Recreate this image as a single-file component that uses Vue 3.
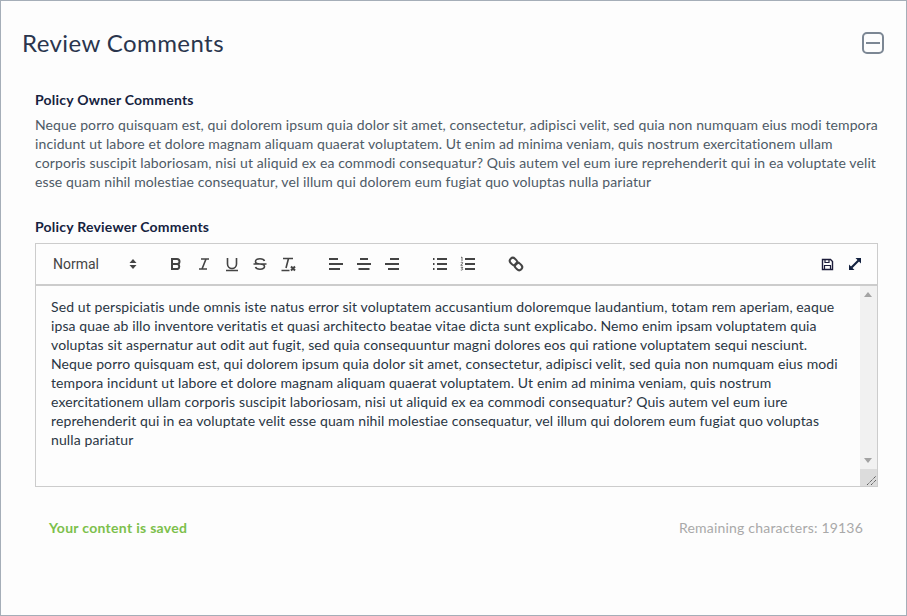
<template>
  <div class="panel">
    <header class="panel-head">
      <h2 class="panel-title">Review Comments</h2>
      <button class="collapse-btn" aria-label="Collapse"><span class="collapse-bar"></span></button>
    </header>

    <section class="owner">
      <h3 class="label">Policy Owner Comments</h3>
      <p class="owner-text">
        <span v-for="line in ownerLines" :key="line" class="line">{{ line }}</span>
      </p>
    </section>

    <section class="reviewer">
      <h3 class="label label-reviewer">Policy Reviewer Comments</h3>
      <div class="editor">
        <div class="toolbar">
          <div class="format-select">
            <span>Normal</span>
            <svg class="select-arrows" width="8" height="12" viewBox="0 0 8 12">
              <path d="M4 1 7.5 5H.5zM4 11 .5 7h7z" fill="#444" />
            </svg>
          </div>

          <div class="tool-group inline-tools">
            <svg class="tool" width="18" height="18" viewBox="0 0 18 18">
              <path class="st" d="M5 4h5a2.5 2.5 0 0 1 0 5H5zM5 9h5.6a2.7 2.7 0 0 1 0 5H5zM5 4v10" />
            </svg>
            <svg class="tool" width="18" height="18" viewBox="0 0 18 18">
              <path class="st thin" d="M6 4h8M4 14h8M11 4 7 14" />
            </svg>
            <svg class="tool" width="18" height="18" viewBox="0 0 18 18">
              <path class="st thin" d="M4.500 3v6a4.500 4.500 0 0 0 9 0V3M3 15.500h12" />
            </svg>
            <svg class="tool" width="18" height="18" viewBox="0 0 18 18">
              <path class="st thin" d="M13.500 6c-.5-1.500-2-2.200-4.500-2.200-2.700 0-4.500 1-4.500 2.700S7 9 9 9s4.500.8 4.500 2.600S11.700 14.200 9 14.200c-2.500 0-4-.7-4.500-2.200M2.500 9h13" />
            </svg>
            <svg class="tool" width="18" height="18" viewBox="0 0 18 18">
              <path class="st thin" d="M4 3.500h10M9.500 3.500 7 13M2.500 15.500h8" />
              <path class="st" d="M12 11.500 16 15.500M16 11.500 12 15.500" />
            </svg>
          </div>

          <div class="tool-group align-tools">
            <svg class="tool" width="18" height="18" viewBox="0 0 18 18">
              <path class="st" d="M2 4h9M2 9h14M2 14h11" />
            </svg>
            <svg class="tool" width="18" height="18" viewBox="0 0 18 18">
              <path class="st" d="M5 4h8M2 9h14M3.500 14h11" />
            </svg>
            <svg class="tool" width="18" height="18" viewBox="0 0 18 18">
              <path class="st" d="M7 4h9M2 9h14M5 14h11" />
            </svg>
          </div>

          <div class="tool-group list-tools">
            <svg class="tool" width="18" height="18" viewBox="0 0 18 18">
              <path class="st" d="M6 4h10M6 9h10M6 14h10" />
              <path class="st" d="M2 4h1.500M2 9h1.500M2 14h1.500" />
            </svg>
            <svg class="tool" width="18" height="18" viewBox="0 0 18 18">
              <path class="st" d="M6 4h10M6 9h10M6 14h10" />
              <path class="st hair" d="M2 2.500 3 2v4M1.800 7.700c.3-.8 2-.8 2 .2 0 .8-2 1.400-2 2.400h2M1.800 12.300h2l-1 1.200c1.300 0 1.300 2-1 1.500" />
            </svg>
          </div>

          <svg class="tool link-tool" width="18" height="18" viewBox="0 0 18 18">
            <g class="st" transform="rotate(45 9 9)">
              <rect x="1.500" y="6" width="8" height="6" rx="3" />
              <rect x="8.500" y="6" width="8" height="6" rx="3" />
            </g>
          </svg>

          <div class="tool-right">
            <svg width="13" height="13" viewBox="0 0 13 13">
              <path d="M1.500 1.500h8l2 2v8h-10z" fill="none" stroke="#1c1c3a" stroke-width="1.400" />
              <path d="M4 1.500h4v3H4zM3.500 7.500h6v4h-6z" fill="none" stroke="#1c1c3a" stroke-width="1.200" />
            </svg>
            <svg width="14" height="14" viewBox="0 0 14 14">
              <path d="M3.500 10.500 10.500 3.500" stroke="#13213f" stroke-width="2.200" />
              <path d="M7.500 1h5.500v5.500zM1 7.500V13h5.500z" fill="#13213f" />
            </svg>
          </div>
        </div>

        <div class="editor-body">
          <div class="editor-text">
            <span v-for="line in reviewerLines" :key="line" class="line">{{ line }}</span>
          </div>
          <div class="scrollbar">
            <span class="arrow up"></span>
            <span class="arrow down"></span>
            <div class="resize-corner">
              <svg width="18" height="18" viewBox="0 0 18 18">
                <path d="M7 16 16 7M11 16 16 11" stroke="#444" stroke-dasharray="1.200 .8" fill="none" />
              </svg>
            </div>
          </div>
        </div>
      </div>

      <div class="status">
        <span class="saved">Your content is saved</span>
        <span class="remaining">Remaining characters: 19136</span>
      </div>
    </section>
  </div>
</template>

<script setup>
const ownerLines = [
  'Neque porro quisquam est, qui dolorem ipsum quia dolor sit amet, consectetur, adipisci velit, sed quia non numquam eius modi tempora',
  'incidunt ut labore et dolore magnam aliquam quaerat voluptatem. Ut enim ad minima veniam, quis nostrum exercitationem ullam',
  'corporis suscipit laboriosam, nisi ut aliquid ex ea commodi consequatur? Quis autem vel eum iure reprehenderit qui in ea voluptate velit',
  'esse quam nihil molestiae consequatur, vel illum qui dolorem eum fugiat quo voluptas nulla pariatur',
];

const reviewerLines = [
  'Sed ut perspiciatis unde omnis iste natus error sit voluptatem accusantium doloremque laudantium, totam rem aperiam, eaque',
  'ipsa quae ab illo inventore veritatis et quasi architecto beatae vitae dicta sunt explicabo. Nemo enim ipsam voluptatem quia',
  'voluptas sit aspernatur aut odit aut fugit, sed quia consequuntur magni dolores eos qui ratione voluptatem sequi nesciunt.',
  'Neque porro quisquam est, qui dolorem ipsum quia dolor sit amet, consectetur, adipisci velit, sed quia non numquam eius modi',
  'tempora incidunt ut labore et dolore magnam aliquam quaerat voluptatem. Ut enim ad minima veniam, quis nostrum',
  'exercitationem ullam corporis suscipit laboriosam, nisi ut aliquid ex ea commodi consequatur? Quis autem vel eum iure',
  'reprehenderit qui in ea voluptate velit esse quam nihil molestiae consequatur, vel illum qui dolorem eum fugiat quo voluptas',
  'nulla pariatur',
];
</script>

<style>
html,
body {
  margin: 0;
  background: #fff;
}
</style>

<style scoped>
.panel {
  box-sizing: border-box;
  width: 907px;
  height: 616px;
  padding: 0 28px 0 21px;
  background: #fdfdfd;
  border: 1px solid #a5aeb8;
  font-family: Lato, "Open Sans", sans-serif;
  color: #16233f;
}

.panel-head {
  display: flex;
  align-items: center;
  justify-content: space-between;
  height: 40px;
  margin-top: 22px;
  margin-right: -6px;
}

.panel-title {
  margin: 0;
  font-size: 24px;
  font-weight: 400;
  line-height: 40px;
  letter-spacing: .42px;
  color: #2a354d;
}

.collapse-btn {
  display: flex;
  align-items: center;
  justify-content: center;
  width: 22px;
  height: 22px;
  padding: 0;
  background: none;
  border: 2px solid #7c8794;
  border-radius: 5px;
}

.collapse-bar {
  width: 14px;
  height: 2px;
  background: #7c8794;
}

.owner,
.reviewer {
  margin-left: 13px;
}

.owner {
  margin-top: 27px;
}

.reviewer {
  margin-top: 26px;
}

.label {
  margin: 0 0 6px;
  font-size: 14px;
  font-weight: 700;
  line-height: 19px;
  letter-spacing: .22px;
}

.label-reviewer {
  margin-bottom: 7px;
}

.owner-text {
  margin: 0;
  font-size: 14px;
  line-height: 19px;
  letter-spacing: .11px;
  color: #4e5a66;
}

.line {
  display: block;
  white-space: nowrap;
}

.editor {
  display: flex;
  flex-direction: column;
  width: 843px;
  height: 244px;
  box-sizing: border-box;
  border: 1px solid #cccccc;
}

.toolbar {
  display: flex;
  align-items: center;
  height: 40px;
  flex: none;
  padding: 0 15px 0 17px;
  border-bottom: 2px solid #cccccc;
}

.format-select {
  display: flex;
  align-items: center;
  justify-content: space-between;
  width: 84px;
  font-family: Roboto, sans-serif;
  font-size: 14px;
  color: #444;
}

.tool {
  flex: none;
}

.st {
  fill: none;
  stroke: #444;
  stroke-width: 2;
}

.thin {
  stroke-width: 1.600;
}

.hair {
  stroke-width: .8;
}

.tool-group {
  display: flex;
  gap: 10px;
}

.inline-tools {
  margin-left: 30px;
}

.align-tools {
  margin-left: 30px;
}

.list-tools {
  margin-left: 30px;
}

.link-tool {
  margin-left: 30px;
}

.tool-right {
  display: flex;
  align-items: center;
  gap: 14px;
  margin-left: auto;
}

.editor-body {
  position: relative;
  display: flex;
  flex: 1;
  min-height: 0;
}

.editor-text {
  flex: 1;
  padding: 11px 15px;
  font-size: 14px;
  line-height: 19px;
  letter-spacing: .11px;
  color: #2a3644;
}

.scrollbar {
  position: relative;
  width: 17px;
  background: #f1f1f1;
}

.arrow {
  position: absolute;
  left: 4px;
  width: 0;
  height: 0;
  border-left: 4px solid transparent;
  border-right: 4px solid transparent;
}

.arrow.up {
  top: 6px;
  border-bottom: 5px solid #a3a3a3;
}

.arrow.down {
  bottom: 23px;
  border-top: 5px solid #a3a3a3;
}

.resize-corner {
  position: absolute;
  right: 0;
  bottom: 0;
  width: 17px;
  height: 17px;
  background: #dcdcdc;
}

.status {
  display: flex;
  justify-content: space-between;
  margin-top: 31px;
  padding: 0 15px 0 14px;
  font-size: 14px;
  line-height: 19px;
  letter-spacing: .2px;
}

.saved {
  font-weight: 700;
  letter-spacing: .3px;
  color: #7cc04b;
}

.remaining {
  color: #a9a9a9;
}
</style>
